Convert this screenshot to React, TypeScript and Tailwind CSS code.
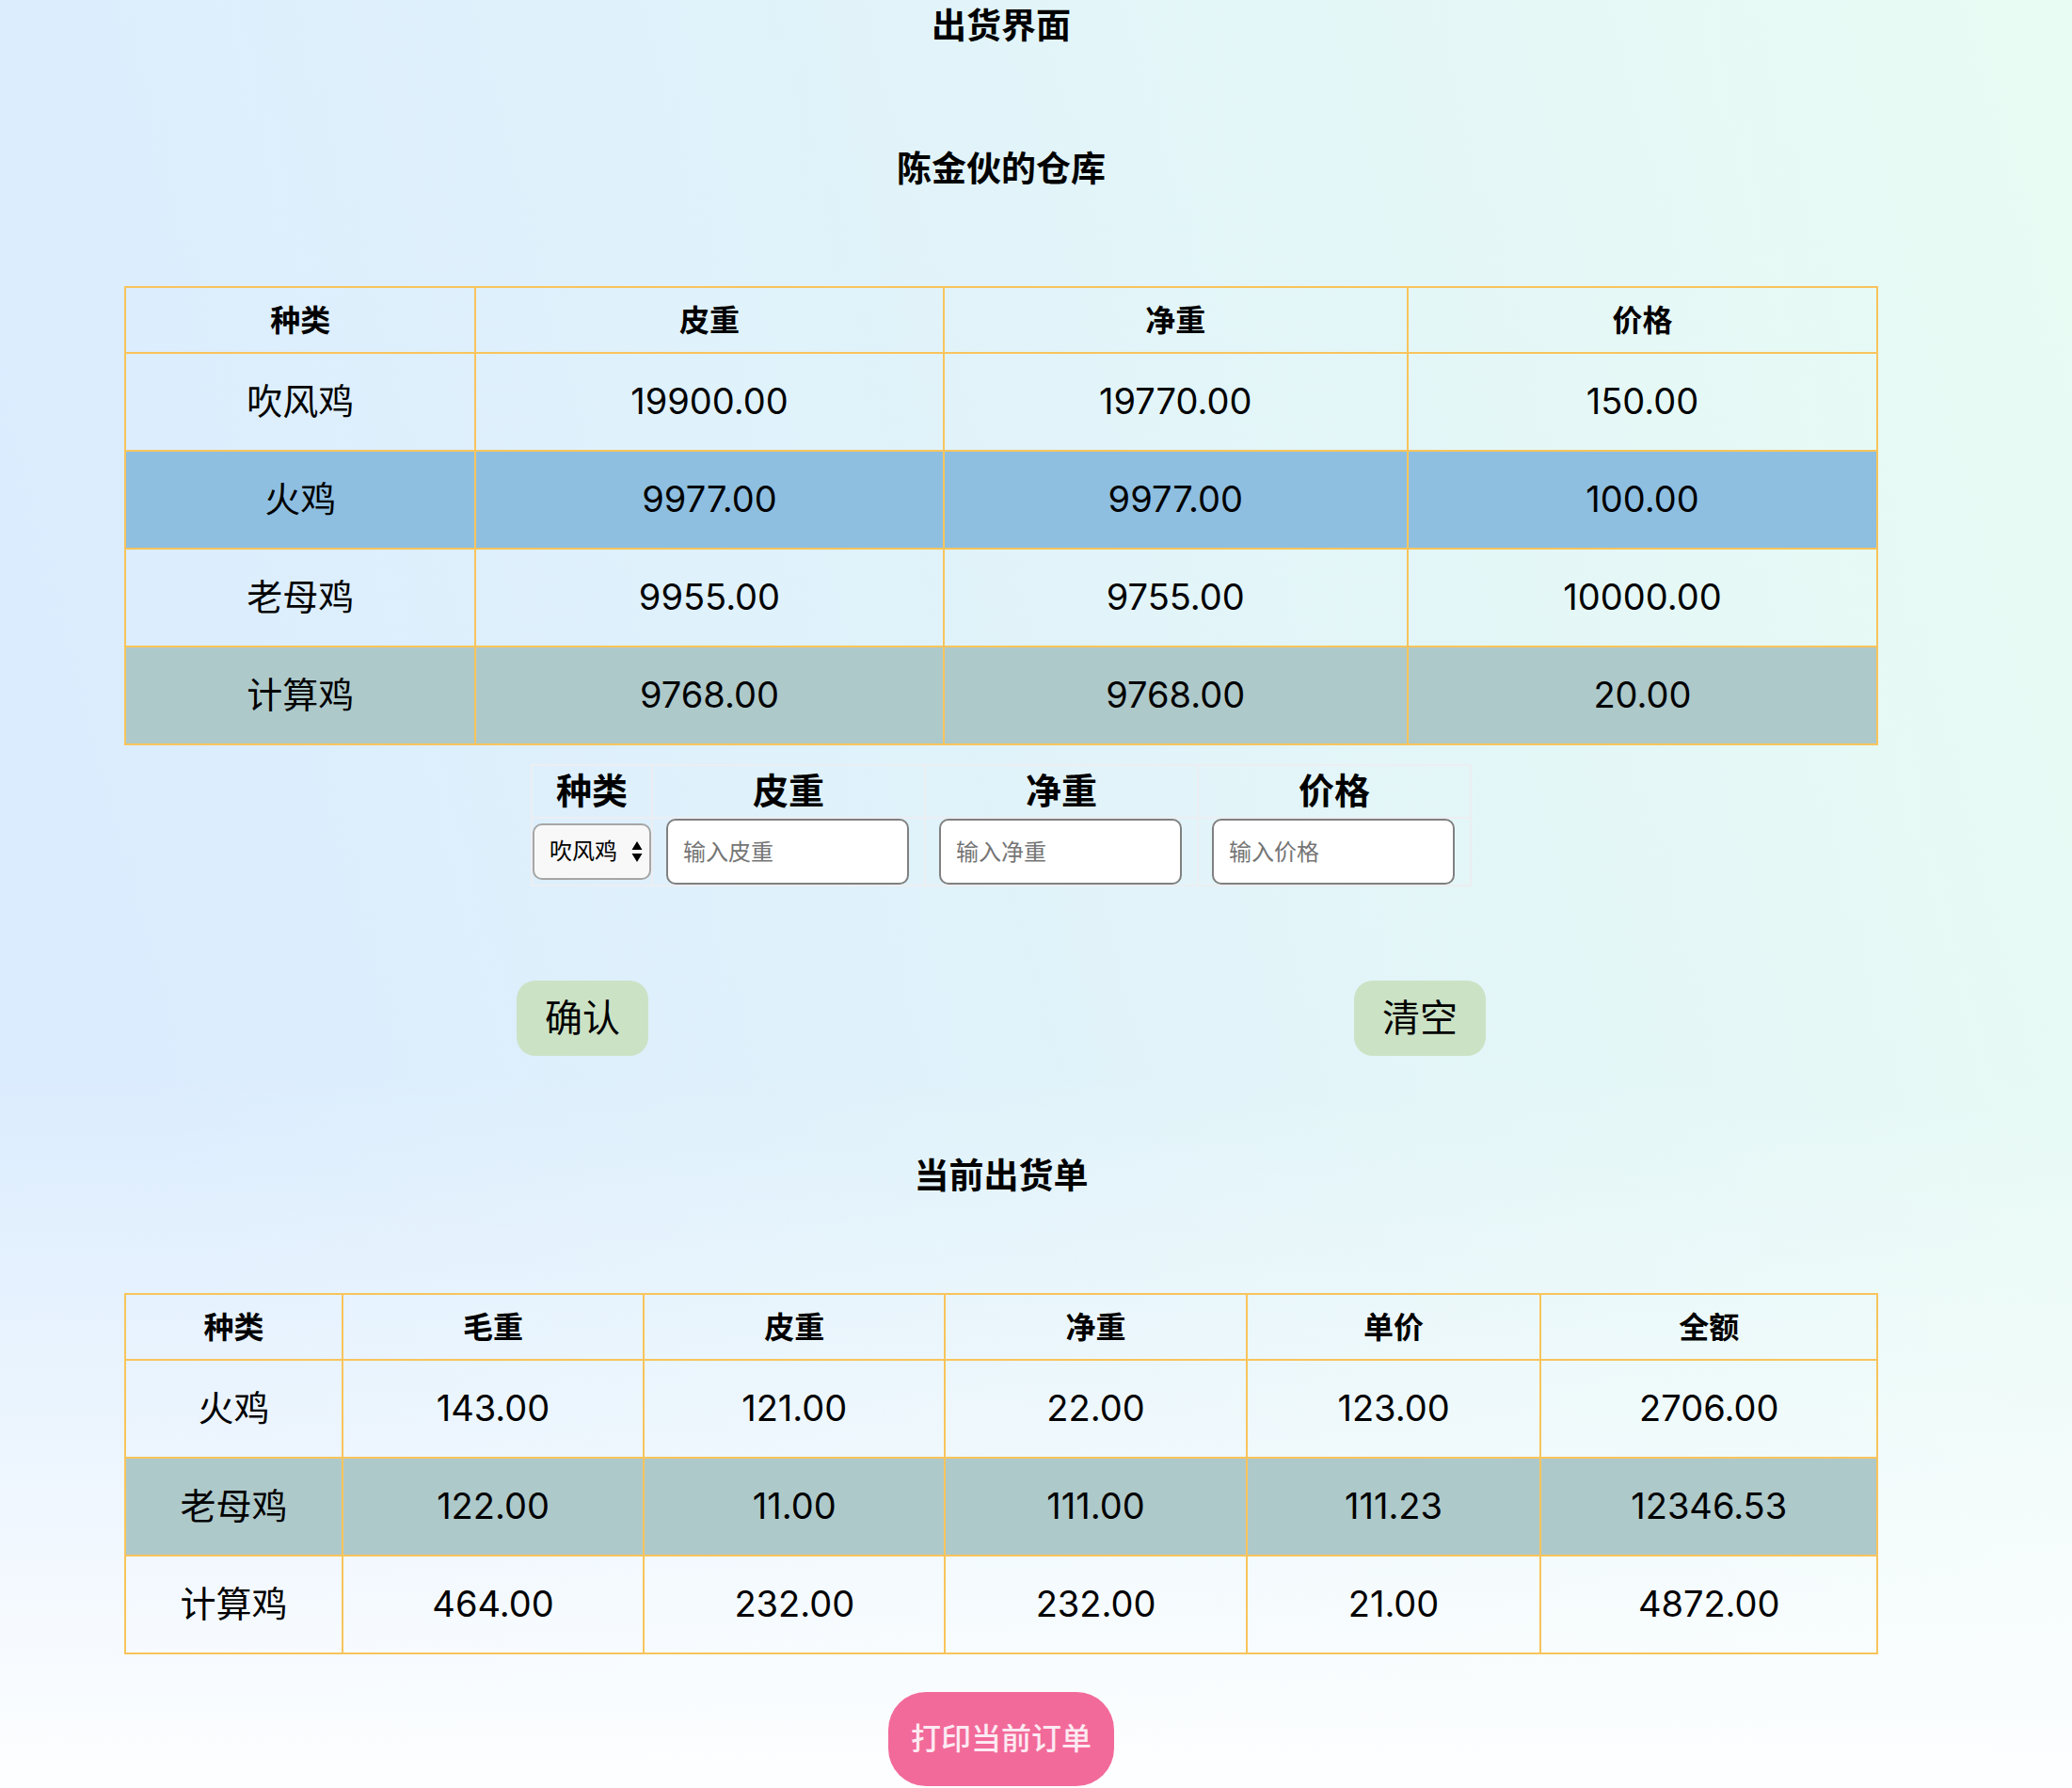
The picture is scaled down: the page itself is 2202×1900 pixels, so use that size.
type Column = { label: string; width: string };
type Row = { tone?: "blue" | "teal"; cells: string[] };

const stockColumns: Column[] = [
  { label: "种类", width: "w-[20%]" },
  { label: "皮重", width: "w-[26.7%]" },
  { label: "净重", width: "w-[26.5%]" },
  { label: "价格", width: "w-[26.8%]" },
];

const stockRows: Row[] = [
  { cells: ["吹风鸡", "19900.00", "19770.00", "150.00"] },
  { tone: "blue", cells: ["火鸡", "9977.00", "9977.00", "100.00"] },
  { cells: ["老母鸡", "9955.00", "9755.00", "10000.00"] },
  { tone: "teal", cells: ["计算鸡", "9768.00", "9768.00", "20.00"] },
];

const orderColumns: Column[] = [
  { label: "种类", width: "w-[12.4%]" },
  { label: "毛重", width: "w-[17.2%]" },
  { label: "皮重", width: "w-[17.2%]" },
  { label: "净重", width: "w-[17.2%]" },
  { label: "单价", width: "w-[16.8%]" },
  { label: "全额", width: "w-[19.2%]" },
];

const orderRows: Row[] = [
  { cells: ["火鸡", "143.00", "121.00", "22.00", "123.00", "2706.00"] },
  { tone: "teal", cells: ["老母鸡", "122.00", "11.00", "111.00", "111.23", "12346.53"] },
  { cells: ["计算鸡", "464.00", "232.00", "232.00", "21.00", "4872.00"] },
];

const tones = { blue: "bg-[#8ebfe1]", teal: "bg-[#aec9ca]" };

const fields = [
  { id: "tare", label: "皮重", hint: "输入皮重" },
  { id: "net", label: "净重", hint: "输入净重" },
  { id: "price", label: "价格", hint: "输入价格" },
];

function DataTable({ columns, rows, label }: { columns: Column[]; rows: Row[]; label: string }) {
  return (
    <table aria-label={label} className="w-full table-fixed border-collapse text-center">
      <thead>
        <tr className="h-[70px]">
          {columns.map((c) => (
            <th key={c.label} className={`border-2 border-[#f8c45c] pt-0.5 text-[32px] leading-10 font-bold ${c.width}`}>
              {c.label}
            </th>
          ))}
        </tr>
      </thead>
      <tbody>
        {rows.map((r) => (
          <tr key={r.cells[0]} className={`h-[104px] ${r.tone ? tones[r.tone] : ""}`}>
            {r.cells.map((cell, i) => (
              <td key={i} className="border-2 border-[#f8c45c] pb-0.5 text-[38px] leading-12">
                {cell}
              </td>
            ))}
          </tr>
        ))}
      </tbody>
    </table>
  );
}

function EntryForm() {
  return (
    <form className="flex flex-col" onSubmit={(e) => e.preventDefault()}>
      <table className="mx-auto mt-5 border-collapse text-center">
        <thead>
          <tr className="h-14">
            <th className="w-32 border-2 border-[#eceef2] p-0 pb-0.5 text-[38px] leading-12 font-bold">
              <label htmlFor="kind">种类</label>
            </th>
            {fields.map((f) => (
              <th key={f.id} className="w-[290px] border-2 border-[#eceef2] p-0 pb-0.5 text-[38px] leading-12 font-bold">
                <label htmlFor={f.id}>{f.label}</label>
              </th>
            ))}
          </tr>
        </thead>
        <tbody>
          <tr className="h-[72px]">
            <td className="border-2 border-[#eceef2] p-0">
              <div className="relative">
                <select
                  id="kind"
                  className="block h-[60px] w-full appearance-none rounded-[10px] border-2 border-[#a6a6a6] bg-[#f8f8f8] pl-4 text-[24px] text-black"
                >
                  <option>吹风鸡</option>
                  <option>火鸡</option>
                  <option>老母鸡</option>
                  <option>计算鸡</option>
                </select>
                <svg
                  aria-hidden="true"
                  viewBox="0 0 12 22"
                  className="pointer-events-none absolute top-[19px] right-[9px] h-[22px] w-3"
                >
                  <path d="M6 0 11.5 9H.5ZM6 22 .5 13h11Z" fill="#000" />
                </svg>
              </div>
            </td>
            {fields.map((f) => (
              <td key={f.id} className="border-2 border-[#eceef2] py-0 pr-4 pl-3.5">
                <input
                  id={f.id}
                  placeholder={f.hint}
                  className="block h-[70px] w-full rounded-[10px] border-2 border-[#808080] bg-white px-4 text-[24px] text-black placeholder:text-[#757575]"
                />
              </td>
            ))}
          </tr>
        </tbody>
      </table>
      <div className="mt-[100px] grid grid-cols-2 justify-items-center px-[42px]">
        <button type="submit" className="h-20 w-[140px] rounded-[20px] bg-[#cce2c5] text-[40px] leading-12">
          确认
        </button>
        <button type="reset" className="h-20 w-[140px] rounded-[20px] bg-[#cce2c5] text-[40px] leading-12">
          清空
        </button>
      </div>
    </form>
  );
}

export default function App() {
  return (
    <div className="min-h-screen bg-[linear-gradient(to_bottom,transparent_60%,#fdfeff_100%),linear-gradient(75deg,#dbecfe_13%,#e9fdf3_105%)] pr-[74px] font-['Inter','Noto_Sans_CJK_SC',sans-serif] text-black">
      <main className="flex flex-col px-[132px]">
        <h1 className="text-center text-[37px] leading-14 font-bold">出货界面</h1>
        <h2 className="my-24 text-center text-[37px] leading-14 font-bold">陈金伙的仓库</h2>
        <DataTable label="仓库" columns={stockColumns} rows={stockRows} />
        <EntryForm />
        <h2 className="mt-[100px] mb-24 text-center text-[37px] leading-14 font-bold">当前出货单</h2>
        <DataTable label="出货单" columns={orderColumns} rows={orderRows} />
        <button
          type="button"
          className="mx-auto mt-10 h-[100px] w-60 rounded-[40px] bg-[#f26a9a] text-[32px] leading-10 font-medium text-[#fdeaf2]"
        >
          打印当前订单
        </button>
      </main>
    </div>
  );
}
